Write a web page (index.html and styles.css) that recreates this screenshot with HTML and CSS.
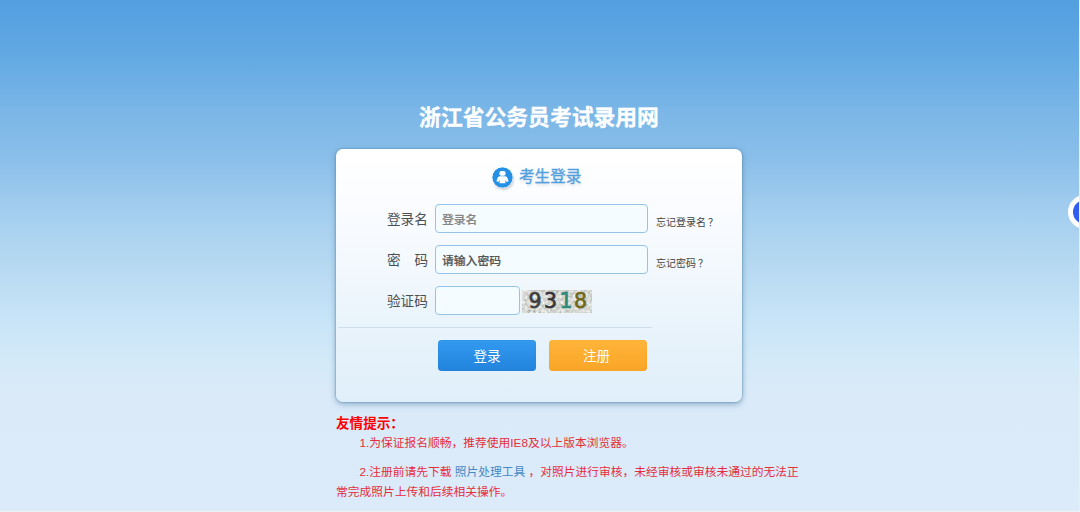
FILE: index.html
```html
<!DOCTYPE html>
<html lang="zh-CN">

  <head>
    <meta charset="utf-8">
    <title>浙江省公务员考试录用网</title>
    <link rel="stylesheet" href="styles.css">
  </head>

  <body>
    <div class="page">
      <h1 class="title">浙江省公务员考试录用网</h1>

      <form class="login">
        <div class="login-head">
          <svg class="user-icon" width="21" height="21" viewBox="0 0 21 21">
            <circle cx="10.5" cy="10.5" r="10.2" fill="#2490e6"/>
            <rect x="7.4" y="4" width="6.200" height="4.800" rx="2" fill="#fff"/>
            <path d="M7.500 9.200h6q2.200.5 3 5l-1.900.8-1.200-2.200v3.400H7.600v-3.400L6.400 15l-1.900-.8q.8-4.500 3-5z" fill="#fff"/>
          </svg>
          <span>考生登录</span>
        </div>

        <div class="row">
          <label for="name">登录名</label>
          <input class="text" id="name" type="text" placeholder="登录名">
          <a class="forgot">忘记登录名<span class="mark">？</span></a>
        </div>
        <div class="row">
          <label for="pwd"><span>密</span><span>码</span></label>
          <input class="text dark" id="pwd" type="text" placeholder="请输入密码">
          <a class="forgot">忘记密码<span class="mark">？</span></a>
        </div>
        <div class="row">
          <label for="code">验证码</label>
          <input class="text short" id="code" type="text">
          <svg class="captcha" width="70" height="23" viewBox="0 0 70 23">
            <filter id="noise" x="0" y="0" width="100%" height="100%">
              <feTurbulence type="fractalNoise" baseFrequency="0.35" numOctaves="2" seed="8"/>
              <feColorMatrix type="matrix" values="0.6 0.5 0.1 0 0.08  0.5 0.6 0.1 0 0.09  0.5 0.5 0.2 0 0.06  0 0 0 0 1"/>
            </filter>
            <rect width="70" height="23" filter="url(#noise)"/>
            <g stroke="#e4e6df" stroke-width="0.7" fill="none">
              <path d="M0 5l9 8M4 21l10-7M17 3l10 4M23 20l8-7M35 3l9 8M37 21l10-5M52 2l7 6M52 20l14-8M61 4l8 3M2 16l5 6"/>
            </g>
            <g class="digits">
              <text x="6.500" y="18" fill="#404040" stroke="#404040">9</text>
              <text x="22" y="18" fill="#393338" stroke="#393338">3</text>
              <text x="37.500" y="18" fill="#2c8a79" stroke="#2c8a79">1</text>
              <text x="52" y="18" fill="#71681c" stroke="#71681c">8</text>
            </g>
          </svg>
        </div>

        <div class="line"></div>
        <div class="buttons">
          <button class="btn blue" type="button">登录</button>
          <button class="btn orange" type="button">注册</button>
        </div>
      </form>

      <div class="tips">
        <h2>友情提示：</h2>
        <p>1.为保证报名顺畅，推荐使用IE8及以上版本浏览器。</p>
        <p>2.注册前请先下载 <a>照片处理工具</a> ，对照片进行审核，未经审核或审核未通过的无法正常完成照片上传和后续相关操作。</p>
      </div>
    </div>

    <div class="float-btn"></div>
  </body>

</html>
```
FILE: styles.css
```css
* {
    box-sizing: border-box;
}
body, html {
    margin: 0;
    padding: 0;
    height: 512px;
    overflow: hidden;
}
body {
    position: relative;
    font-family: "Liberation Sans", "Noto Sans CJK SC", sans-serif;
    border-right: 1px solid #e3f0fa;
    border-bottom: 1px solid #eef2f5;
    background: linear-gradient(#539fe0 0, #60a8e3 50px, #7ab6e7 110px, #89beea 155px, #a5cfef 215px, #b8daf2 270px, #cae5f8 325px, #d4eaf8 365px, #daeaf9 390px, #dbebfa 511px);
}
.page {
    width: 406px;
    margin-left: 336px;
    padding-top: 102px;
}
.title {
    margin: 0 0 15px;
    color: #fff;
    font-size: 21.8px;
    line-height: 32px;
    text-align: center;
    white-space: nowrap;
    -webkit-text-stroke: 0.3px #fff;
}
.login {
    height: 253px;
    border-radius: 7px;
    padding-top: 18px;
    background: linear-gradient(#fff 0, #fcfdff 40px, #f4f9fe 110px, #e8f3fb 185px, #e0effa 253px);
    box-shadow: 0 0 1px 1px rgba(84, 139, 181, 0.35), 0 2px 6px rgba(80, 125, 160, 0.6);
}
.login-head {
    display: flex;
    align-items: center;
    height: 21px;
    margin-left: 156px;
    color: #519fdf;
    font-size: 15.6px;
    line-height: 21px;
    text-shadow: 1px 2px 3px #d3dbe1;
    -webkit-text-stroke: 0.3px #519fdf;
}
.login-head span {
    margin-top: -2px;
}
.user-icon {
    margin-right: 6px;
    border-radius: 50%;
    box-shadow: 1px 2px 2px #ccd3d9;
}
.row {
    display: flex;
    align-items: center;
    height: 29px;
    margin-top: 12px;
    padding-left: 51px;
}
.login-head + .row {
    margin-top: 16px;
}
.row label {
    display: flex;
    justify-content: space-between;
    width: 41px;
    margin: -1px 7px 0 0;
    color: #4b5054;
    font-size: 13.6px;
    white-space: nowrap;
}
.text {
    width: 213px;
    height: 29px;
    padding: 0 6px 1px;
    border: 1px solid #93c4e8;
    border-radius: 4px;
    background: #f5fcff;
    font-family: "Noto Sans CJK SC", sans-serif;
    font-size: 11.8px;
    font-weight: 500;
    outline: none;
}
.text::placeholder {
    color: #858585;
    -webkit-text-stroke: 0.2px #858585;
}
.dark::placeholder {
    color: #555;
    -webkit-text-stroke: 0.2px #555;
}
.short {
    width: 85px;
}
.forgot {
    margin: 5px 0 0 8px;
    color: #444;
    font-size: 10px;
    white-space: nowrap;
}
.mark {
    padding-left: 2px;
}
.captcha {
    margin: 2px 0 0 2px;
}
.digits {
    font-family: "DejaVu Sans", sans-serif;
    font-size: 20.5px;
    stroke-width: 0.7px;
}
.line {
    width: 314px;
    height: 1px;
    margin: 12px 0 0 2px;
    background: #ccdfec;
}
.buttons {
    display: flex;
    gap: 13px;
    margin: 12px 0 0 102px;
}
.btn {
    width: 98px;
    height: 31px;
    padding: 0 0 2px;
    border: none;
    border-radius: 4px;
    color: #fff;
    font-family: inherit;
    font-size: 13.6px;
}
.blue {
    background: linear-gradient(#339af0, #2283dc);
    box-shadow: inset 0 0 1px #1c75c8;
}
.orange {
    padding-right: 3px;
    background: linear-gradient(#ffb53a, #f9a526);
    box-shadow: inset 0 0 1px #eb9822;
}
.tips {
    width: 464px;
    margin-top: 12px;
    color: #e62e3b;
    font-size: 11.75px;
    line-height: 20px;
}
.tips h2 {
    margin: 0;
    color: #f00;
    font-size: 13.6px;
    line-height: 19px;
}
.tips p {
    margin: 0 0 9px;
    text-indent: 2em;
}
.tips a {
    color: #4689c4;
}
.float-btn {
    position: absolute;
    top: 195px;
    right: -23px;
    width: 34px;
    height: 34px;
    border: 5px solid #fff;
    border-radius: 50%;
    background: radial-gradient(circle at 12px 12px, #608aff 0, #608aff 5px, #315cf0 7px);
}
```
